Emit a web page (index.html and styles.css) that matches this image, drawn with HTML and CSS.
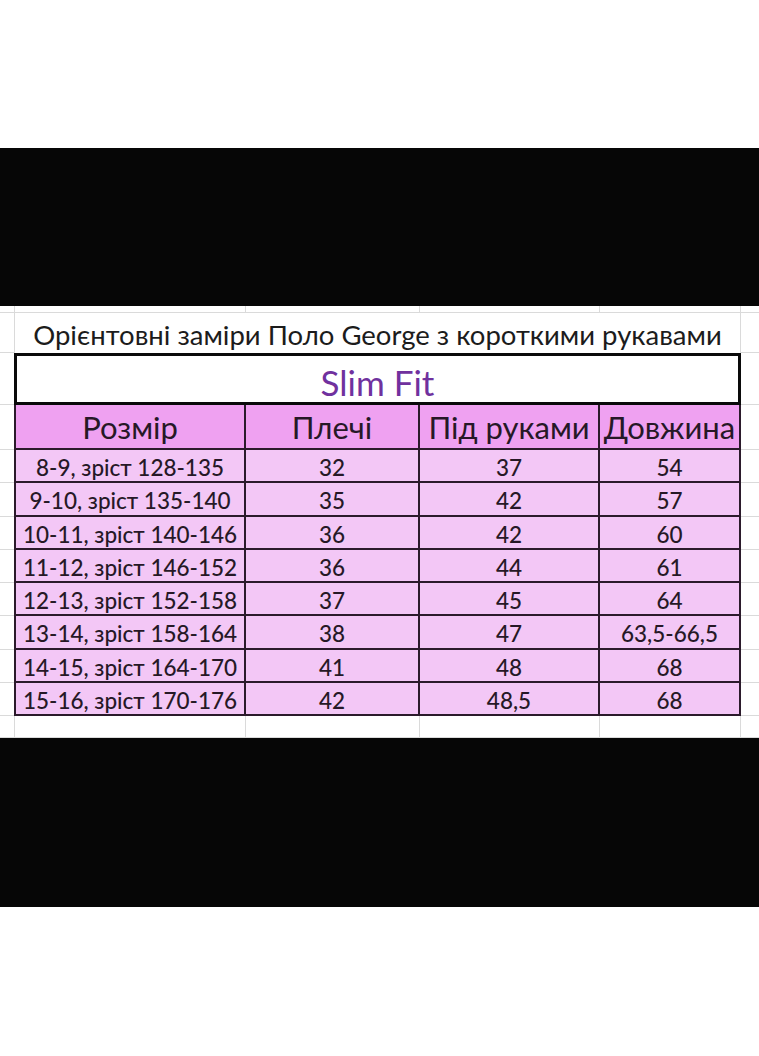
FILE: index.html
```html
<!DOCTYPE html>
<html lang="uk">
<head>
<meta charset="utf-8">
<title>Розмірна сітка Поло George</title>
<link rel="stylesheet" href="styles.css">
</head>
<body>
<div class="page">
  <div class="white-top"></div>
  <div class="band"></div>
  <div class="sheet">
    <!-- partial row -->
    <div class="g"></div><div class="g"></div><div class="g"></div><div class="g"></div><div class="g"></div><div class="g last"></div>
    <!-- title row -->
    <div class="g"></div>
    <div class="title">Орієнтовні заміри Поло George з короткими рукавами</div>
    <div class="g last"></div>
    <!-- slim fit row -->
    <div class="g"></div>
    <div class="slim">Slim Fit</div>
    <div class="g last"></div>
    <!-- header -->
    <div class="g"></div>
    <div class="h first">Розмір</div>
    <div class="h">Плечі</div>
    <div class="h">Під руками</div>
    <div class="h">Довжина</div>
    <div class="g last"></div>
    <!-- data -->
    <div class="g"></div><div class="d first">8-9, зріст 128-135</div><div class="d">32</div><div class="d">37</div><div class="d">54</div><div class="g last"></div>
    <div class="g"></div><div class="d first">9-10, зріст 135-140</div><div class="d">35</div><div class="d">42</div><div class="d">57</div><div class="g last"></div>
    <div class="g"></div><div class="d first">10-11, зріст 140-146</div><div class="d">36</div><div class="d">42</div><div class="d">60</div><div class="g last"></div>
    <div class="g"></div><div class="d first">11-12, зріст 146-152</div><div class="d">36</div><div class="d">44</div><div class="d">61</div><div class="g last"></div>
    <div class="g"></div><div class="d first">12-13, зріст 152-158</div><div class="d">37</div><div class="d">45</div><div class="d">64</div><div class="g last"></div>
    <div class="g"></div><div class="d first">13-14, зріст 158-164</div><div class="d">38</div><div class="d">47</div><div class="d">63,5-66,5</div><div class="g last"></div>
    <div class="g"></div><div class="d first">14-15, зріст 164-170</div><div class="d">41</div><div class="d">48</div><div class="d">68</div><div class="g last"></div>
    <div class="g"></div><div class="d first">15-16, зріст 170-176</div><div class="d">42</div><div class="d">48,5</div><div class="d">68</div><div class="g last"></div>
    <!-- blank row -->
    <div class="g"></div><div class="g"></div><div class="g"></div><div class="g"></div><div class="g"></div><div class="g last"></div>
  </div>
  <div class="band band-bottom"></div>
</div>
</body>
</html>
```

FILE: styles.css
```css
html, body {
  margin: 0;
  padding: 0;
  background: #ffffff;
}

.page {
  width: 759px;
  height: 1056px;
  display: flex;
  flex-direction: column;
  background: #ffffff;
}

.white-top {
  height: 148px;
}

.band {
  height: 158px;
  background: #060606;
}

.band-bottom {
  height: 169px;
}

.sheet {
  display: grid;
  grid-template-columns: 15px 231px 174px 180px 141px 18px;
  grid-template-rows: 7px 40px 52px 45px repeat(8, 33.25px) 22px;
  height: 432px;
  font-family: Lato, "Open Sans", "DejaVu Sans", sans-serif;
  color: #261826;
  background: #ffffff;
}

.g {
  box-sizing: border-box;
  border-right: 1px solid #dadada;
  border-bottom: 1px solid #dadada;
}

.g.last {
  border-right: none;
}

.title {
  grid-column: 2 / 6;
  box-sizing: border-box;
  border-right: 1px solid #dadada;
  display: flex;
  align-items: center;
  justify-content: center;
  padding-top: 2px;
  font-size: 27.5px;
  color: #1c1c1c;
  white-space: nowrap;
}

.slim {
  grid-column: 2 / 6;
  box-sizing: border-box;
  border: 3px solid #0a0a0a;
  margin-left: -1px;
  display: flex;
  align-items: center;
  justify-content: center;
  padding-top: 6px;
  font-size: 35px;
  color: #70319e;
  background: #ffffff;
}

.h, .d {
  box-sizing: border-box;
  border-right: 2px solid #2b1a2b;
  border-bottom: 2px solid #2b1a2b;
  display: flex;
  align-items: center;
  justify-content: center;
  white-space: nowrap;
}

.first {
  border-left: 2px solid #2b1a2b;
  margin-left: -1px;
}

.h {
  background: #efa1f1;
  font-size: 31px;
  padding-top: 1px;
}

.d {
  background: #f3c7f6;
  font-size: 22.5px;
  font-weight: 500;
  padding-top: 4px;
}
```
